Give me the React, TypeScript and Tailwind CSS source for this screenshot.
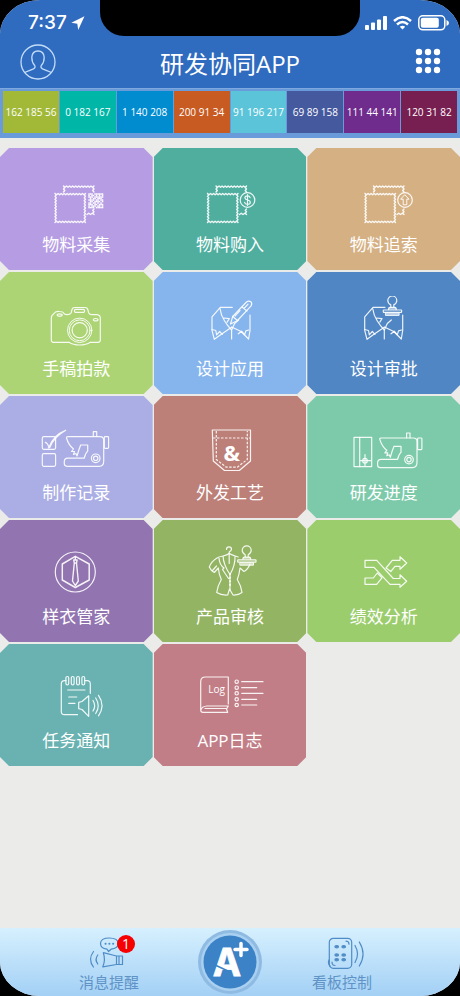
import React from 'react';
import clsx from 'clsx';

type Point = [number, number];

const swatches = [
  { label: '162 185 56', color: 'bg-[#a2b938]' },
  { label: '0 182 167', color: 'bg-[#00b6a7]' },
  { label: '1 140 208', color: 'bg-[#018cd0]' },
  { label: '200 91 34', color: 'bg-[#c85b22]' },
  { label: '91 196 217', color: 'bg-[#5bc4d9]' },
  { label: '69 89 158', color: 'bg-[#45599e]' },
  { label: '111 44 141', color: 'bg-[#6f2c8d]' },
  { label: '120 31 82', color: 'bg-[#781f52]' },
];

const qrRows = [
  '1110111111',
  '1011010101',
  '1110111111',
  '0101101110',
  '1111011011',
  '0110111101',
  '1101101010',
  '1110110111',
  '1011101101',
  '1111011111',
];

// Stitched edge of a fabric sample: a zigzag that follows the given points
function stitch(points: Point[]) {
  let d = `M${points[0][0]} ${points[0][1]}`;
  for (let i = 1; i < points.length; i++) {
    const [x0, y0] = points[i - 1];
    const [x1, y1] = points[i];
    const length = Math.hypot(x1 - x0, y1 - y0);
    const steps = Math.max(2, Math.round(length / 3) * 2);
    const nx = -(y1 - y0) / length;
    const ny = (x1 - x0) / length;
    for (let s = 1; s <= steps; s++) {
      const t = s / steps;
      const off = s % 2 ? 1.3 : 0;
      d += `L${(x0 + (x1 - x0) * t + nx * off).toFixed(2)} ${(y0 + (y1 - y0) * t + ny * off).toFixed(2)}`;
    }
  }
  return d;
}

function TileIcon({ children }: { children: React.ReactNode }) {
  return (
    <svg
      className="h-14 w-[88px]"
      viewBox="0 0 88 56"
      fill="none"
      stroke="white"
      strokeWidth="1.2"
      strokeOpacity={0.9}
      strokeLinecap="round"
      strokeLinejoin="round"
      aria-hidden="true"
    >
      {children}
    </svg>
  );
}

function Fabric() {
  return (
    <g strokeWidth="1.4">
      <path d={stitch([[23, 21.5], [53.5, 21.5], [53.5, 50.5], [23, 50.5], [23, 21.5]])} />
      <path d={stitch([[31.5, 20], [31.5, 14], [62, 14], [62, 20]])} />
      <path d={stitch([[62, 37], [62, 42.5], [55, 42.5]])} />
    </g>
  );
}

function CollectIcon() {
  return (
    <TileIcon>
      <Fabric />
      {qrRows.map((row, y) =>
        row.split('').map((cell, x) =>
          cell === '1' ? (
            <rect
              key={`${x}-${y}`}
              x={56.3 + x * 1.5}
              y={21.3 + y * 1.5}
              width={1.5}
              height={1.5}
              fill="white"
              stroke="none"
            />
          ) : null
        )
      )}
    </TileIcon>
  );
}

function PurchaseIcon() {
  return (
    <TileIcon>
      <g transform="translate(-1.5 0)">
        <Fabric />
        <circle cx="63" cy="28" r="7.3" />
        <path d="M65.6 25.6c-.4-1.3-1.4-1.8-2.6-1.8-1.5 0-2.6.8-2.6 2s1 1.8 2.6 2.2c1.8.4 2.8 1 2.8 2.3s-1.2 2.1-2.8 2.1c-1.500 0-2.6-.6-2.9-2M63 22.5v11" />
      </g>
    </TileIcon>
  );
}

function TraceIcon() {
  return (
    <TileIcon>
      <g transform="translate(2 0)">
        <Fabric />
        <circle cx="63" cy="28" r="7.3" />
        <path d="M63 23l4 4.2h-2.2v5.6h-3.6v-5.6H59z" strokeWidth="1" />
      </g>
    </TileIcon>
  );
}

function CameraIcon() {
  return (
    <TileIcon>
      <path d="M37 46.3H21.5q-2.200 0-2.200-2.200V22q0-2.500 2.200-4 2-3 5.500-2.500 4 0 4.500 1.500 1 1.700 3.500 1.700 3.200 0 4.200-2l.8-3.200q.6-2 2.600-2h10.600q2 0 2.600 2l.8 3.200q1 2 3.400 2H65q3.300.3 3.300 3.600v21.800q0 2.200-2.200 2.200h-7.800" />
      <path d="M37 46.3q4 2.700 10.700 2.700t10.600-2.700" />
      <circle cx="47.7" cy="34.3" r="12.2" strokeWidth="1" />
      <circle cx="47.7" cy="34.3" r="10.4" strokeWidth="1" />
      <circle cx="47.7" cy="34.3" r="7.6" />
      <rect x="42.5" y="13.3" width="10" height="3" rx="1" />
      <ellipse cx="27.7" cy="19" rx="2.5" ry="1.2" />
      <ellipse cx="63.7" cy="23.7" rx="2.3" ry="1.2" />
    </TileIcon>
  );
}

function Stamp({ background }: { background: string }) {
  return (
    <g>
      <path d="M50.8 10.7v-1.8q-3-1.600-3-4.400a4.500 4.500 0 0 1 9 0q0 2.800-3 4.400v1.800" fill={background} />
      <path d="M48.500 13.800q0-2.500 1.500-2.500h4.800q1.500 0 1.500 2.500" fill="white" fillOpacity="0.5" />
      <rect x="45.8" y="16.6" width="13.3" height="2.8" fill="white" fillOpacity="0.6" strokeWidth="1" />
      <rect x="43.3" y="14" width="18.3" height="2.400" rx="0.5" fill={background} />
    </g>
  );
}

function Collar() {
  return (
    <>
      <path d="M45 11.300H33l-8.300 9.500v13.500l2.300 9 7-5 10.300-7" />
      <path d="M32.700 12.500q1 7 4.300 12 3 5 7.300 9.500M36.500 22l5.500.6-2.200 3.500" />
      <path d="M24.700 33.500l3.800 1 .8 4.300 3-3.300 2.700 2.800M44.300 31l9.500 4.500 7.500 7.500 1.400-8.500V19" />
      <path d="M61.500 34l-3 .8-1.200 4-3-3.600-3.300 2.600M44.300 43v-9l3-6.500 4-3.500" />
    </>
  );
}

function DesignIcon() {
  return (
    <TileIcon>
      <g transform="translate(1.3 0)">
        <Collar />
      </g>
      <path fill="#86b4ec" d="M44.500 28l2.200-7.500L60.500 6q2.300-1.600 4.300-.3 1.700 1.800.3 4.200L51.500 24.500z" />
      <path d="M46.700 20.500l4.800 4M56 11l5 4M58 12.500l4-4.300M54 14.500l-5 5.500" />
    </TileIcon>
  );
}

function ApproveIcon() {
  return (
    <TileIcon>
      <Collar />
      <Stamp background="#4f86c3" />
    </TileIcon>
  );
}

function SewingMachine() {
  return (
    <>
      <path d="M36 16.700H68q3.700 0 3.700 3.700v20.900q0 5-4.500 5H35q-2.700 0-2.700-2.700v-2q0-3.500 3.500-3.500H52.300q1-5 3.400-7V25H48.700L47 29.500 45 36l-1-2.500-2.500 1 1-3-3 0 2-2.500Q36.500 25 34.500 18q-.3-1.300 1.500-1.300z" />
      <path d="M61.300 16.500v-4.800h3.400v4.800" />
      <rect x="72.300" y="16.700" width="4.300" height="11.600" rx="0.800" />
      <circle cx="63.700" cy="38.300" r="4.300" />
      <circle cx="63.700" cy="38.300" r="2.200" />
    </>
  );
}

function RecordIcon() {
  return (
    <TileIcon>
      <rect x="10.3" y="16.7" width="13.3" height="12.6" rx="1.5" />
      <rect x="10.3" y="33.7" width="13.3" height="12.6" rx="1.5" />
      <path d="M13.300 22.300q2.200.6 3.700 4.800Q21.500 15 33.700 10.300 22 17 17.700 27.600l-1.400.2" />
      <SewingMachine />
    </TileIcon>
  );
}

function PocketIcon() {
  return (
    <TileIcon>
      <path d="M26.300 10h38.200v31L53.300 50.500H38.500L27.300 41z" />
      <path
        strokeDasharray="2.5 1.5"
        strokeLinecap="butt"
        d="M27 18h37M30.300 11v28.500l10 7.700h11l10-7.700V11"
      />
      <text
        x="45.7"
        y="41"
        textAnchor="middle"
        fill="white"
        stroke="none"
        className="font-['Open_Sans',sans-serif] text-[22px] font-bold"
      >
        &amp;
      </text>
    </TileIcon>
  );
}

function ProgressIcon() {
  return (
    <TileIcon>
      <rect x="14" y="17.3" width="17.7" height="29.3" />
      <path d="M19.700 17.300v29.300M20 40.700h10.500M25 34.500v11.500" />
      <circle cx="25" cy="40.7" r="2.3" />
      <g transform="translate(5.3 1.3)">
        <SewingMachine />
      </g>
    </TileIcon>
  );
}

function TieIcon() {
  return (
    <TileIcon>
      <circle cx="43.3" cy="28" r="20" />
      <path strokeWidth="1.5" d="M43.300 12.300L57.200 20v16l-13.900 7.500L30.300 36V20z" />
      <path strokeWidth="1.4" d="M43.300 13v2.500M41.700 16h3.400l-.6 3h-2.200zM42.300 19l-1.800 18 2.800 4.500 3-4.500-1.800-18" />
    </TileIcon>
  );
}

function ReviewIcon() {
  return (
    <TileIcon>
      <path d="M40.500 5.500q0-2.700 2.500-2.700t2.500 2.500q0 1.500-2.300 2.700v2" />
      <path d="M43.200 9.500q-2 1.500-6 2.500-4.500.5-7 2.500Q25 18 23.300 23q1.500 3.500 5 5.500l4-4.500q.5 6 3 11.500-3.500 6-4.600 13 4.500 3 11 2.500L43.500 45l3.500 6q5.500.3 9-2.500-1-7-4.700-13 2-5 2.700-11.500l4 3.500q4-2 6-7.500" />
      <path d="M43.200 9.500q3 1.500 6 2.500l3 1M37 12q.5 9 7 18.500M49 12q.5 9-5 18.500v15M33 14q.5 7 5 10l-1.500 1.500 6 9" />
      <path d="M43.200 10.500v9M26.500 26.500l4-4.500" />
      <path strokeDasharray="0.5 3" strokeWidth="1.800" d="M44 30v14" />
      <g transform="translate(8.4 1.8)">
        <Stamp background="#93b463" />
      </g>
    </TileIcon>
  );
}

function AnalysisIcon() {
  return (
    <TileIcon>
      <path d="M25 16.300h11.700L53.300 34.500H60v-3.700l6.700 6.500L60 43.300v-3H50L34 23.300h-9z" />
      <path d="M25 34h8.300l4-5 4.800 4.700-5.400 6.600H25zM46 24l6.300-7.700H60v-3.600l6.700 6.300L60 25.300v-3h-5l-4.200 5.200z" />
    </TileIcon>
  );
}

function NoticeIcon() {
  return (
    <TileIcon>
      <path d="M34 12.700h-1.500q-3.200 0-3.200 3.200v27.600q0 3.200 3.200 3.200h13M53 12.700h2.200q3.100 0 3.100 3.200v9.400" />
      {[35.3, 40.7, 46, 51.3].map((x) => (
        <rect key={x} x={x - 1.4} y="8.5" width="2.8" height="8.5" rx="1.4" />
      ))}
      <path d="M35.700 22H53M36.700 29h8M36.700 35.300H43" />
      <path d="M46.700 34.300l3.300-.8 6.700-5.700v20.500L50 41.500l-3.300-.8z" />
      <path d="M61 32.500q3.300 5.300 0 10.500M63.700 30q5 7.800 0 15.500M66.500 27.300q7 10.200 0 20.500" />
    </TileIcon>
  );
}

function LogIcon() {
  return (
    <TileIcon>
      <path d="M42.300 36V9H19.500q-4.800 0-4.800 4.800V42q0 2.300 2.300 2.300h24.700l-1.200-3.300 1.800-3H21q-5 .2-6.300 4.300M19 40.500h21.500" />
      <text
        x="30.5"
        y="24.5"
        textAnchor="middle"
        fill="white"
        stroke="none"
        className="font-['Open_Sans',sans-serif] text-[10px]"
      >
        Log
      </text>
      {[13.7, 19.7, 25.3, 31.3, 37].map((y, i) => (
        <g key={y}>
          <circle cx="50.7" cy={y} r="1.7" />
          <path d={`M55.700 ${y}H${i === 0 || i === 2 ? 77 : 70.7}`} />
        </g>
      ))}
    </TileIcon>
  );
}

const tiles = [
  { label: '物料采集', color: 'bg-[#b69de3]', icon: CollectIcon },
  { label: '物料购入', color: 'bg-[#50ae9f]', icon: PurchaseIcon },
  { label: '物料追索', color: 'bg-[#d5b083]', icon: TraceIcon },
  { label: '手稿拍款', color: 'bg-[#acd475]', icon: CameraIcon },
  { label: '设计应用', color: 'bg-[#86b4ec]', icon: DesignIcon },
  { label: '设计审批', color: 'bg-[#4f86c3]', icon: ApproveIcon },
  { label: '制作记录', color: 'bg-[#abaee4]', icon: RecordIcon },
  { label: '外发工艺', color: 'bg-[#bc8078]', icon: PocketIcon },
  { label: '研发进度', color: 'bg-[#7dcaaa]', icon: ProgressIcon },
  { label: '样衣管家', color: 'bg-[#9174b0]', icon: TieIcon },
  { label: '产品审核', color: 'bg-[#93b463]', icon: ReviewIcon },
  { label: '绩效分析', color: 'bg-[#9bcd6d]', icon: AnalysisIcon },
  { label: '任务通知', color: 'bg-[#6ab2b1]', icon: NoticeIcon },
  { label: 'APP日志', color: 'bg-[#c17e86]', icon: LogIcon },
];

function StatusBar() {
  return (
    <div className="grid h-9 grid-cols-[1fr_260px_1fr]">
      <div className="flex items-center gap-1 pt-2.5 pl-7">
        <span className="font-['Inter',sans-serif] text-[19px] leading-6 font-medium">7:37</span>
        <svg className="h-3.5 w-3.5" viewBox="0 0 14 14" fill="white" aria-hidden="true">
          <path d="M13.500.3L.3 6.800l6 .9.900 6.200z" />
        </svg>
      </div>
      <div className="rounded-b-[24px] bg-black" />
      <div className="flex items-center justify-end gap-1.5 pt-2.5 pr-[11px]">
        <svg className="h-3.5 w-[22px]" viewBox="0 0 22 14" fill="white" aria-hidden="true">
          <rect x="0" y="9" width="4" height="5" rx="1" />
          <rect x="6" y="6.5" width="4" height="7.5" rx="1" />
          <rect x="12" y="3.5" width="4" height="10.5" rx="1" />
          <rect x="18" y="0" width="4" height="14" rx="1" />
        </svg>
        <svg className="h-3.5 w-[19px]" viewBox="0 0 19 14" fill="none" stroke="white" strokeWidth="2.5" aria-hidden="true">
          <path d="M1 5q8.500-7.500 17 0M4 8.500q5.500-5 11 0" />
          <path d="M9.500 13.500L6.800 10.800q2.700-2 5.400 0z" fill="white" stroke="none" />
        </svg>
        <svg className="h-4 w-[31px]" viewBox="0 0 31 16" fill="none" aria-hidden="true">
          <rect x="0.8" y="0.8" width="26" height="14" rx="4" stroke="white" strokeWidth="1.5" />
          <rect x="2.8" y="2.8" width="18" height="10" rx="2" fill="white" />
          <path d="M28.500 5q2.500 1 2.500 3t-2.500 3z" fill="white" />
        </svg>
      </div>
    </div>
  );
}

function Header() {
  return (
    <header className="bg-[#2f6bbf] text-white">
      <StatusBar />
      <div className="grid h-[52px] grid-cols-[1fr_auto_1fr] items-center px-4">
        <button type="button" aria-label="Profile" className="justify-self-start pl-1">
          <svg className="h-9 w-9" viewBox="0 0 36 36" fill="none" stroke="#c3dcf8" strokeWidth="1.3" aria-hidden="true">
            <circle cx="18" cy="18" r="17" />
            <path d="M4.500 28.500q5-2 9-3.700 2.500-1.300 1-3.600-2.700-3-2.700-8 .5-6.200 6.200-6.200t6.200 6.200q0 5-2.700 8-1.500 2.300 1 3.600 4 1.700 9 3.700" />
          </svg>
        </button>
        <h1 className="pt-1 text-2xl">研发协同APP</h1>
        <button type="button" aria-label="Menu" className="justify-self-end">
          <svg className="h-8 w-8" viewBox="0 0 32 32" fill="white" aria-hidden="true">
            {[6, 15, 24].map((y) =>
              [7, 16, 25].map((x) => <circle key={`${x}-${y}`} cx={x} cy={y} r="3.2" />)
            )}
          </svg>
        </button>
      </div>
      <ul className="flex gap-px border-t border-[#7ea8de] bg-[#699ad9] px-[3px] pt-0.5 pb-[5px]">
        {swatches.map(({ label, color }) => (
          <li
            key={label}
            className={clsx(
              "flex h-[42px] flex-1 items-center justify-center font-['Open_Sans',sans-serif] text-[10px] whitespace-nowrap",
              color
            )}
          >
            {label}
          </li>
        ))}
      </ul>
    </header>
  );
}

function Footer() {
  return (
    <footer className="grid grid-cols-[1fr_64px_1fr] items-start bg-gradient-to-b from-[#d6f0fe] to-[#a3d0f5] pb-0.5 text-[15px] leading-6 text-[#5f93c6]">
      <div className="flex justify-end pr-[59px]">
        <button type="button" className="relative flex flex-col items-center pt-2">
          <svg className="h-[34px] w-12" viewBox="0 0 48 34" fill="none" stroke="#4f8cc6" strokeWidth="1.2" strokeLinejoin="round" strokeLinecap="round" aria-hidden="true">
            <path d="M22 13.200q-6.500-.8-6.500-5.600 0-5.600 8.800-5.600t8.800 5.600q0 5-7 5.600l-2.600 2.300z" />
            <path strokeWidth="2" d="M20.500 7.700h.1M24.300 7.700h.1M28.100 7.700h.1" />
            <path d="M18.300 16.700L31.500 20h6v8.500h-6l-13.700 2.300q3-7 .5-14.100zM31.500 20v8.500M34 20v8.500" />
            <path d="M8.500 15.500q-6 8 0 15.500M12.800 19q-3.500 4.500 0 9" />
          </svg>
          消息提醒
          <span className="absolute top-[7px] right-1 flex h-[18px] w-[18px] items-center justify-center rounded-full bg-[#f60000] font-['Open_Sans',sans-serif] text-sm text-white">
            1
          </span>
        </button>
      </div>
      <button type="button" aria-label="A+" className="pt-0.5">
        <svg className="h-16 w-16" viewBox="0 0 64 64" aria-hidden="true">
          <circle cx="32" cy="32" r="32" fill="#8fbbe3" />
          <circle cx="32" cy="32" r="29" fill="#a9d0f0" />
          <circle cx="32" cy="32" r="26.5" fill="#3b82c7" />
          <text
            x="29"
            y="46"
            textAnchor="middle"
            fill="white"
            stroke="white"
            strokeWidth="0.8"
            className="font-['Inter',sans-serif] text-[38px] font-bold"
          >
            A
          </text>
          <path d="M16 34.500l14 6.500" stroke="#3b82c7" strokeWidth="1.5" />
          <path d="M43 13.500v12M37 19.500h12" stroke="white" strokeWidth="3.500" strokeLinecap="round" />
        </svg>
      </button>
      <div className="flex pl-[50px]">
        <button type="button" className="flex flex-col items-center pt-2">
          <svg className="h-[34px] w-12" viewBox="0 0 48 34" fill="none" stroke="#4f8cc6" strokeWidth="1.2" strokeLinecap="round" aria-hidden="true">
            <rect x="11.3" y="2.3" width="22.4" height="30" rx="4" />
            <path d="M28 5.200q3 0 3 3M14 26q0 3.500 3 3.500M11 24q-1.500 3 1 6" />
            {[10.7, 19, 23.7].map((y) =>
              [18.7, 25.7].map((x) => (
                <ellipse key={`${x}-${y}`} cx={x} cy={y} rx="1.8" ry="1.1" fill="#4f8cc6" />
              ))
            )}
            <path d="M37 9.500q5 8.500 0 17M41.300 6q7.500 12 0 24" />
          </svg>
          看板控制
        </button>
      </div>
    </footer>
  );
}

export default function App() {
  return (
    <div className="min-h-screen bg-black font-['Open_Sans','Noto_Sans_CJK_SC',sans-serif]">
      <div className="flex min-h-screen flex-col overflow-hidden rounded-[40px/34px] bg-[#ebebe9]">
        <Header />
        <main className="flex-1 pt-2.5 pb-8">
          <div className="grid grid-cols-3 gap-x-px gap-y-0.5">
            {tiles.map(({ label, color, icon: Icon }) => (
              <button
                key={label}
                type="button"
                className={clsx(
                  'flex h-[122px] flex-col items-center pt-6 text-[17px] leading-[34px] text-white',
                  '[clip-path:polygon(9px_0,calc(100%_-_9px)_0,100%_9px,100%_calc(100%_-_9px),calc(100%_-_9px)_100%,9px_100%,0_calc(100%_-_9px),0_9px)]',
                  color
                )}
              >
                <Icon />
                {label}
              </button>
            ))}
          </div>
        </main>
        <Footer />
      </div>
    </div>
  );
}
